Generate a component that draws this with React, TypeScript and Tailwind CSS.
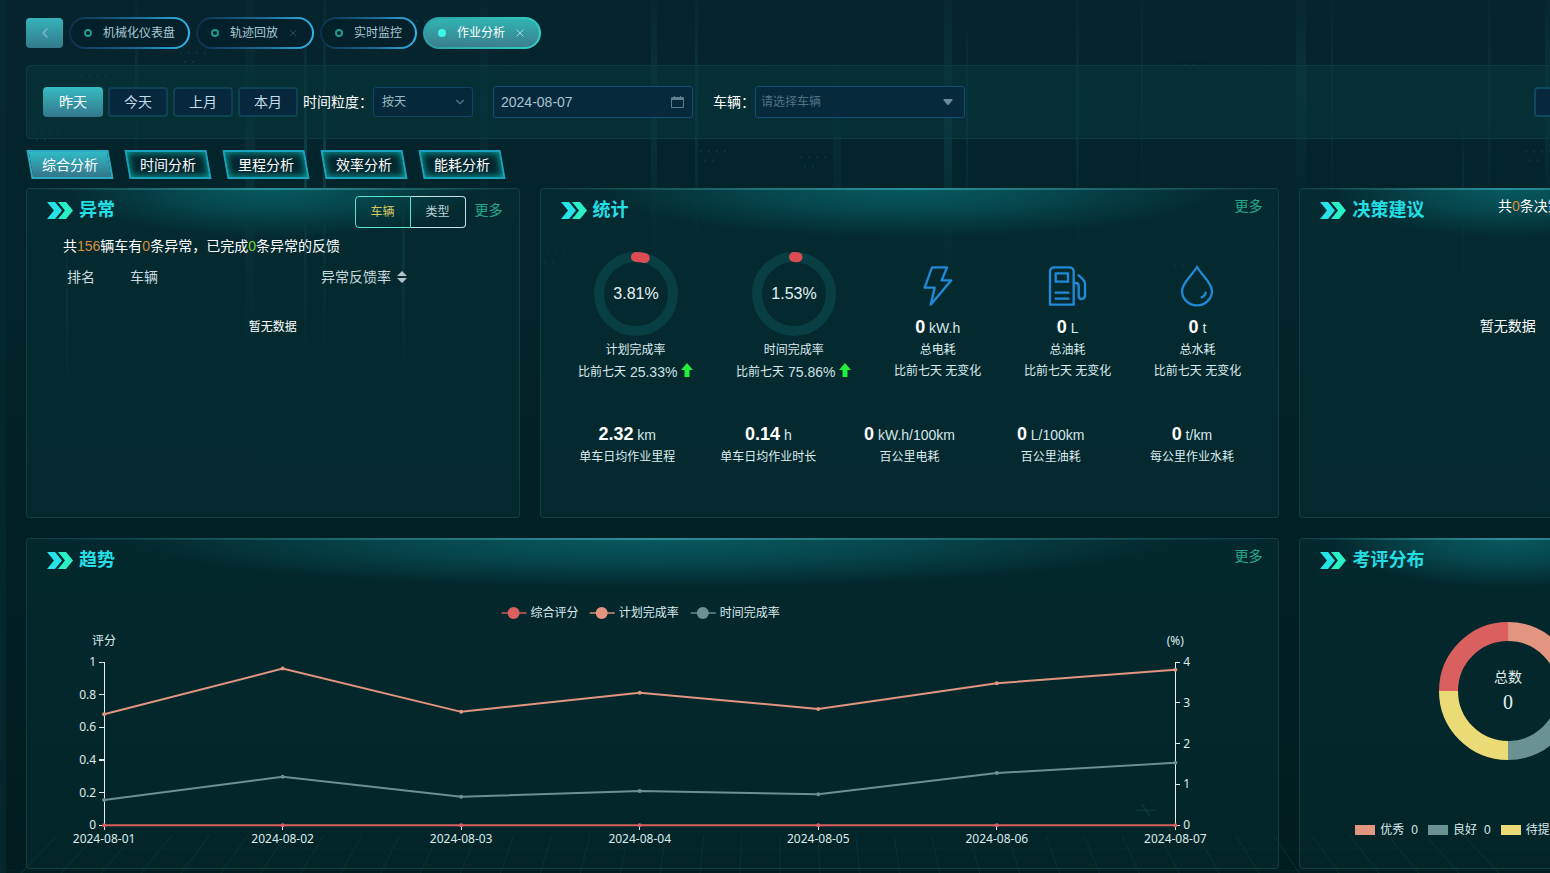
import type { ReactNode } from "react";
import { ChevronDown, ChevronLeft, X } from "lucide-react";
import clsx from "clsx";

const tags = [
  { label: "机械化仪表盘" },
  { label: "轨迹回放", closable: true },
  { label: "实时监控" },
  { label: "作业分析", closable: true, active: true },
];

const ranges = ["昨天", "今天", "上月", "本月"];

const tabs = ["综合分析", "时间分析", "里程分析", "效率分析", "能耗分析"];

const rings = [
  { percent: 3.81, label: "计划完成率", change: "25.33%" },
  { percent: 1.53, label: "时间完成率", change: "75.86%" },
];

const averages = [
  { value: "2.32", unit: "km", label: "单车日均作业里程" },
  { value: "0.14", unit: "h", label: "单车日均作业时长" },
  { value: "0", unit: "kW.h/100km", label: "百公里电耗" },
  { value: "0", unit: "L/100km", label: "百公里油耗" },
  { value: "0", unit: "t/km", label: "每公里作业水耗" },
];

const days = [
  "2024-08-01",
  "2024-08-02",
  "2024-08-03",
  "2024-08-04",
  "2024-08-05",
  "2024-08-06",
  "2024-08-07",
];

const series = [
  {
    name: "计划完成率",
    color: "#e2957f",
    max: 4,
    legend: 562,
    data: [2.72, 3.84, 2.78, 3.25, 2.85, 3.48, 3.81],
  },
  {
    name: "时间完成率",
    color: "#6b9292",
    max: 4,
    legend: 663,
    data: [0.62, 1.19, 0.7, 0.84, 0.76, 1.28, 1.53],
  },
  {
    name: "综合评分",
    color: "#d9605f",
    max: 1,
    legend: 474,
    data: [0, 0, 0, 0, 0, 0, 0],
  },
];

const grades = [
  { label: "优秀", color: "#e2957f" },
  { label: "良好", color: "#6b9292" },
  { label: "待提升", color: "#ebdb77" },
  { label: "不合格", color: "#d9605f" },
];

// x, top, height, width, opacity
const beams = [
  [245, 0, 400, 10, 0.14],
  [304, 20, 350, 3, 0.35],
  [323, 0, 370, 3, 0.3],
  [66, 240, 160, 2, 0.2],
  [135, 0, 190, 3, 0.15],
  [402, 180, 200, 3, 0.25],
  [480, 0, 260, 8, 0.1],
  [651, 0, 260, 6, 0.2],
  [695, 0, 260, 3, 0.22],
  [833, 60, 220, 8, 0.1],
  [944, 0, 290, 8, 0.24],
  [966, 30, 200, 2, 0.22],
  [1076, 0, 270, 3, 0.2],
  [1141, 0, 210, 2, 0.15],
  [1296, 0, 210, 10, 0.18],
  [1331, 0, 220, 2, 0.15],
  [1462, 120, 180, 2, 0.15],
  [1488, 0, 240, 3, 0.15],
  [1545, 0, 220, 5, 0.2],
];

const dots = [
  [32, 130],
  [80, 75],
  [180, 52],
  [200, 88],
  [400, 20],
  [665, 128],
  [700, 150],
  [800, 156],
  [1170, 255],
  [1180, 55],
  [1525, 150],
  [540, 252],
];

function Backdrop() {
  return (
    <svg
      className="absolute inset-0 h-full w-full"
      viewBox="0 0 1550 873"
      preserveAspectRatio="none"
      aria-hidden="true"
    >
      <defs>
        <linearGradient id="beam" x1="0" y1="0" x2="0" y2="1">
          <stop offset="0" stopColor="#17606b" stopOpacity="0.3" />
          <stop offset="0.4" stopColor="#1c7480" />
          <stop offset="1" stopColor="#17606b" stopOpacity="0" />
        </linearGradient>
      </defs>
      {beams.map(([x, y, h, w, o]) => (
        <rect key={x} x={x} y={y} width={w} height={h} fill="url(#beam)" opacity={o} />
      ))}
      {dots.map(([x, y]) => (
        <g key={`${x}-${y}`} fill="#1d7f7c" opacity="0.18">
          {[0, 8, 16, 24].map((d) => (
            <rect key={d} x={x + d} y={y} width="2" height="2" />
          ))}
          <rect x={x + 4} y={y + 9} width="2" height="2" />
          <rect x={x + 12} y={y + 9} width="2" height="2" />
        </g>
      ))}
      <g stroke="#1e6a64" strokeWidth="1" opacity="0.25">
        <path d="M0 869H1550M120 848H1550" opacity="0.5" />
        {Array.from({ length: 38 }, (_, i) => {
          const x = 20 + i * 40;
          return <path key={i} d={`M${x} 873L${x + (775 - x) * 0.05} 834`} />;
        })}
      </g>
      <path d="M1136 809h20M1142 803l8 12" stroke="#3f7f7c" opacity="0.4" />
    </svg>
  );
}

function Tag({ label, closable, active }: { label: string; closable?: boolean; active?: boolean }) {
  return (
    <div
      className={clsx(
        "flex h-8 items-center rounded-full border-2 border-transparent px-[13px] text-xs",
        active
          ? "text-white [background:linear-gradient(to_bottom,#31b3b2,#3a7f8d)_padding-box,linear-gradient(to_right,#2d9da3,#2fd0c4)_border-box]"
          : "text-[#a9c9d4] [background:linear-gradient(#04202a,#04202a)_padding-box,linear-gradient(to_right,#0e2f4d,#1d6f99_60%,#35b5e8)_border-box]",
      )}
    >
      <span
        className={clsx(
          "mr-[11px] size-2 rounded-full",
          active ? "bg-[#3ff5ea]" : "border-2 border-[#1f9a8d]",
        )}
      />
      <a href="#" aria-current={active ? "page" : undefined}>
        {label}
      </a>
      {closable && (
        <button type="button" aria-label={`关闭${label}`} className="ml-[9px]">
          <X className={clsx("size-3", active ? "text-[#a5dbe0]" : "text-[#35484d]")} strokeWidth={2} />
        </button>
      )}
    </div>
  );
}

function Panel({
  title,
  extra,
  className,
  children,
}: {
  title: string;
  extra?: ReactNode;
  className?: string;
  children: ReactNode;
}) {
  return (
    <section
      className={clsx(
        "relative flex min-h-[330px] flex-col rounded-[3px] border border-[#123d43] bg-[#08353a]/40 bg-[radial-gradient(ellipse_42%_48px_at_50%_0,#08585f_0%,#074a51_40%,#053a41_70%,transparent_100%)] bg-no-repeat",
        className,
      )}
    >
      <div className="absolute -top-px right-0 left-0 h-0.5 bg-linear-to-r from-transparent via-[#2c9099] to-transparent" />
      <header className="flex h-[42px] items-center pr-4 pl-5">
        <svg className="mr-1.5 h-[17px] w-[26px]" viewBox="0 0 26 17" aria-hidden="true">
          <path d="M0 0H8L15 8.5L8 17H0L7 8.5Z" fill="#25e3e6" />
          <path d="M11 0H19L26 8.5L19 17H11L18 8.5Z" fill="#2af0c8" />
        </svg>
        <h2 className="text-lg font-bold text-[#23dfe4]">{title}</h2>
        <div className="ml-auto flex items-center">{extra}</div>
      </header>
      {children}
    </section>
  );
}

function More({ className }: { className?: string }) {
  return (
    <a href="#" className={clsx("text-sm text-[#27a98c]", className)}>
      更多
    </a>
  );
}

function Ring({ percent }: { percent: number }) {
  const length = 2 * Math.PI * 37;
  return (
    <svg className="size-[90px]" viewBox="0 0 90 90" role="img" aria-label={`${percent}%`}>
      <circle cx="45" cy="45" r="37" fill="none" stroke="#073f45" strokeWidth="10" />
      <circle
        cx="45"
        cy="45"
        r="37"
        fill="none"
        stroke="#dc4b52"
        strokeWidth="10"
        strokeLinecap="round"
        strokeDasharray={`${(length * percent) / 100} ${length}`}
        transform="rotate(-90 45 45)"
      />
      <text x="45" y="50" textAnchor="middle" fontSize="16" fill="#e4f1f3">
        {percent}%
      </text>
    </svg>
  );
}

function BoltIcon() {
  return (
    <svg className="h-[42px] w-[30px]" viewBox="190 260 90 126" fill="none" stroke="#218ad6" strokeWidth="7" strokeLinejoin="round">
      <path d="M217 267H262L246 306H275L213 379L225 328H195Z" />
    </svg>
  );
}

function FuelIcon() {
  return (
    <svg className="h-[42px] w-10" viewBox="564 260 120 126" fill="none" stroke="#218ad6" strokeWidth="7" strokeLinecap="round">
      <path d="M570 379V280Q570 267 584 267H627Q641 267 641 280V379Z" />
      <path d="M587 285H624V310H587ZM587 343H625M587 361H625" />
      <path d="M643 314H648Q656 314 656 323V352Q656 362 665 362T675 352V316Q675 309 669 303L656 291" />
    </svg>
  );
}

function DropIcon() {
  return (
    <svg className="h-[42px] w-9" viewBox="956 260 108 126" fill="none" stroke="#218ad6" strokeWidth="7" strokeLinecap="round">
      <path d="M1010 266C996 290 965 314 965 338A45 43 0 0 0 1055 338C1055 314 1024 290 1010 266Z" />
      <path d="M1024 357Q1034 353 1036 343" />
    </svg>
  );
}

const totals = [
  { unit: "kW.h", label: "总电耗", icon: <BoltIcon /> },
  { unit: "L", label: "总油耗", icon: <FuelIcon /> },
  { unit: "t", label: "总水耗", icon: <DropIcon /> },
];

function Amount({ value, unit }: { value: string; unit: string }) {
  return (
    <p className="h-6 text-sm leading-6 text-[#d3e6e9]">
      <b className="text-lg leading-6 text-white">{value}</b> {unit}
    </p>
  );
}

function TrendChart() {
  const left = 77;
  const right = 1147;
  const bottom = 235;
  const height = 163;
  const x = (i: number) => left + ((right - left) / 6) * i;
  const y = (ratio: number) => bottom - ratio * height;

  return (
    <svg
      className="w-full font-['Noto_Sans','Noto_Sans_CJK_SC',sans-serif] text-xs"
      viewBox="0 0 1250 278"
      fill="#dcebec"
      role="img"
      aria-label="趋势"
    >
      {series.map((s) => (
        <g key={s.name}>
          <path d={`M${s.legend} 23h25`} stroke={s.color} strokeWidth="2" opacity="0.7" />
          <circle cx={s.legend + 12} cy="23" r="6" fill={s.color} />
          <text x={s.legend + 29} y="27">
            {s.name}
          </text>
        </g>
      ))}
      <text x={left} y="55" textAnchor="middle">
        评分
      </text>
      <text x={right} y="55" textAnchor="middle">
        (%)
      </text>

      {/* Axes */}
      <g stroke="#e3efef" shapeRendering="crispEdges">
        <path d={`M${left} ${y(1)}V${bottom}M${right} ${y(1)}V${bottom}`} />
        {[0, 0.2, 0.4, 0.6, 0.8, 1].map((v) => (
          <path key={v} d={`M${left - 5} ${y(v)}h5`} />
        ))}
        {[0, 1, 2, 3, 4].map((v) => (
          <path key={v} d={`M${right} ${y(v / 4)}h5`} />
        ))}
        {days.map((day, i) => (
          <path key={day} d={`M${x(i)} ${bottom}v5`} />
        ))}
      </g>
      {[0, 0.2, 0.4, 0.6, 0.8, 1].map((v) => (
        <text key={v} x={left - 8} y={y(v) + 4} textAnchor="end">
          {v}
        </text>
      ))}
      {[0, 1, 2, 3, 4].map((v) => (
        <text key={v} x={right + 8} y={y(v / 4) + 4}>
          {v}
        </text>
      ))}
      {days.map((day, i) => (
        <text key={day} x={x(i)} y="253" textAnchor="middle">
          {day}
        </text>
      ))}

      {series.map((s) => (
        <g key={s.name} fill={s.color}>
          <polyline
            points={s.data.map((v, i) => `${x(i)},${y(v / s.max)}`).join(" ")}
            fill="none"
            stroke={s.color}
            strokeWidth="2"
          />
          {s.data.map((v, i) => (
            <circle key={i} cx={x(i)} cy={y(v / s.max)} r="2" />
          ))}
        </g>
      ))}
    </svg>
  );
}

function GradeDonut() {
  const quarter = (2 * Math.PI * 59.5) / 4;
  return (
    <svg className="size-[140px]" viewBox="0 0 140 140" role="img" aria-label="考评分布">
      {grades.map((g, i) => (
        <circle
          key={g.label}
          cx="70"
          cy="70"
          r="59.5"
          fill="none"
          stroke={g.color}
          strokeWidth="19"
          strokeDasharray={`${quarter} ${quarter * 3}`}
          transform={`rotate(${i * 90 - 90} 70 70)`}
        />
      ))}
      <text x="70" y="61" textAnchor="middle" fontSize="14" fill="#e3efef">
        总数
      </text>
      <text
        x="70"
        y="88"
        textAnchor="middle"
        fontSize="20"
        fill="#e3efef"
        className="font-['Liberation_Serif',serif]"
      >
        0
      </text>
    </svg>
  );
}

export default function App() {
  return (
    <div className="relative min-h-screen overflow-hidden bg-linear-to-b from-[#06242e] via-[#03242b] via-30% to-[#001c1e] font-['Liberation_Sans','Noto_Sans_CJK_SC',sans-serif] text-sm text-white">
      <Backdrop />
      <div className="absolute inset-y-0 left-0 w-1.5 bg-[#062c33]/60" />

      {/* The board is wider than the window and runs off its right edge */}
      <main className="relative w-[112%] pt-[17px] pr-5 pb-[5px] pl-[26px]">
        <nav className="flex items-center gap-1.5">
          <button
            type="button"
            aria-label="返回"
            className="flex h-[30px] w-[37px] items-center justify-center rounded-sm bg-linear-to-b from-[#34b4bb] to-[#327a8a]"
          >
            <ChevronLeft className="size-4 text-[#86b4d0]" strokeWidth={2} />
          </button>
          {tags.map((tag) => (
            <Tag key={tag.label} {...tag} />
          ))}
        </nav>

        {/* Filters */}
        <form className="mt-4 flex h-[74px] items-center rounded-sm border border-[#0f3a40] bg-[#08383e]/50 px-4">
          <div className="flex gap-[5px]">
            {ranges.map((range, i) => (
              <button
                key={range}
                type="button"
                className={clsx(
                  "h-[30px] w-[60px] rounded-sm",
                  i === 0
                    ? "bg-linear-to-b from-[#35bcc1] to-[#32788c] text-white"
                    : "border-2 border-[#0d4153] bg-[#07273c] text-[#c3dcec]",
                )}
              >
                {range}
              </button>
            ))}
          </div>
          <label htmlFor="grain" className="ml-[5px]">
            时间粒度：
          </label>
          <div className="relative">
            <select
              id="grain"
              className="block h-[30px] w-[100px] appearance-none rounded-[3px] border border-[#0f4462] bg-[#05293a] pl-2 text-xs text-[#9dbac8]"
            >
              <option>按天</option>
            </select>
            <ChevronDown
              className="pointer-events-none absolute top-2 right-1.5 size-3.5 text-[#567789]"
              strokeWidth={2}
            />
          </div>
          <div className="relative ml-5">
            <input
              type="text"
              aria-label="日期"
              defaultValue="2024-08-07"
              className="block h-8 w-[200px] rounded-[3px] border border-[#0f4f77] bg-[#07293c] pl-[7px] text-sm text-[#a9c4d2]"
            />
            <svg
              className="pointer-events-none absolute top-2.5 right-[9px] h-3 w-[13px]"
              viewBox="0 0 13 12"
              fill="#5e7d8d"
              aria-hidden="true"
            >
              <path d="M1 1H3V0H4V1H9V0H10V1H12Q13 1 13 2V11Q13 12 12 12H1Q0 12 0 11V2Q0 1 1 1ZM1 4V11H12V4Z" />
            </svg>
          </div>
          <label htmlFor="vehicle" className="ml-5">
            车辆：
          </label>
          <div className="relative">
            <select
              id="vehicle"
              className="block h-8 w-[210px] appearance-none rounded-[3px] border border-[#0f4f77] bg-[#07293c] pl-[5px] text-xs text-[#4f7285]"
            >
              <option>请选择车辆</option>
            </select>
            <svg className="pointer-events-none absolute top-[13px] right-3 h-1.5 w-2.5" viewBox="0 0 10 6" fill="#6b8a99">
              <path d="M1 0H9Q10 0 9.500 1L6 5.500Q5 6.300 4 5.500L.5 1Q0 0 1 0Z" />
            </svg>
          </div>
          <button
            type="button"
            aria-label="导出"
            className="mr-[105px] ml-auto h-[30px] w-[60px] rounded-sm border-2 border-[#0d4a60] bg-[#07273c]"
          />
        </form>

        <div role="tablist" className="mt-[11px] flex gap-2.5">
          {tabs.map((tab, i) => (
            <button
              key={tab}
              type="button"
              role="tab"
              aria-selected={i === 0}
              className="relative h-[29px] w-[88px]"
            >
              <span
                className={clsx(
                  "absolute inset-x-[3px] inset-y-0 skew-x-[10deg] border-2",
                  i === 0
                    ? "border-[#2ba9be] bg-linear-to-b from-[#2fbac6] to-[#32768a]"
                    : "border-[#1ba3bd] bg-[#04262e] shadow-[inset_0_0_7px_1px_#0a9a92]",
                )}
              />
              <span className="relative">{tab}</span>
            </button>
          ))}
        </div>

        <div className="mt-[9px] grid grid-cols-[493fr_739fr_416fr] gap-5">
          <Panel
            title="异常"
            extra={
              <>
                <div className="mt-1 mr-[9px] flex h-8 text-xs">
                  <button type="button" className="w-14 rounded-l-sm border border-[#55e6cd] text-[#d9c75f]">
                    车辆
                  </button>
                  <button type="button" className="w-[55px] rounded-r-sm border border-l-0 border-[#c5e2e4] text-[#b9cfd4]">
                    类型
                  </button>
                </div>
                <More />
              </>
            }
          >
            <p className="mt-[5px] pl-9 leading-5">
              共<span className="text-[#d98f3a]">156</span>辆车有
              <span className="text-[#d98f3a]">0</span>条异常，已完成
              <span className="text-[#7fd32c]">0</span>条异常的反馈
            </p>
            <table className="mx-[30px] mt-1.5 table-fixed text-left text-[#c9d9dd]">
              <thead>
                <tr className="h-[30px]">
                  <th className="w-[63px] pl-2.5 font-normal">排名</th>
                  <th className="w-[191px] pl-2.5 font-normal">车辆</th>
                  <th className="pl-2.5 font-normal">
                    <button type="button" className="flex items-center gap-1.5">
                      异常反馈率
                      <svg className="h-3 w-2.5" viewBox="0 0 10 12" fill="#b4c3cc" aria-hidden="true">
                        <path d="M5 0L10 5H0ZM5 12L0 7H10Z" />
                      </svg>
                    </button>
                  </th>
                </tr>
              </thead>
            </table>
            <p className="mt-[25px] text-center text-xs leading-5">暂无数据</p>
          </Panel>

          <Panel title="统计" extra={<More className="mb-2" />}>
            <div className="flex items-end justify-around px-4 pt-[18px] text-xs text-[#dcebee]">
              {rings.map((ring) => (
                <div key={ring.label} className="flex flex-col items-center">
                  <Ring percent={ring.percent} />
                  <p className="h-[22px] leading-[22px]">{ring.label}</p>
                  <p className="flex h-[21px] items-center gap-1">
                    比前七天 <span className="text-sm text-[#cfe0e3]">{ring.change}</span>
                    <svg className="mb-1 h-3.5 w-3" viewBox="0 0 12 14" fill="#22ee3c" aria-label="上升">
                      <path d="M6 0L12 7H8.500V14H3.500V7H0Z" />
                    </svg>
                  </p>
                </div>
              ))}
              {totals.map((total) => (
                <div key={total.label} className="flex flex-col items-center">
                  <div className="mb-2">{total.icon}</div>
                  <Amount value="0" unit={total.unit} />
                  <p className="h-[22px] leading-[22px]">{total.label}</p>
                  <p className="h-[21px] leading-[21px]">比前七天 无变化</p>
                </div>
              ))}
            </div>
            <div className="mt-10 grid grid-cols-5 px-4 text-center text-xs text-[#dcebee]">
              {averages.map((item) => (
                <div key={item.label}>
                  <Amount value={item.value} unit={item.unit} />
                  <p className="h-[22px] leading-[22px]">{item.label}</p>
                </div>
              ))}
            </div>
          </Panel>

          <Panel
            title="决策建议"
            extra={
              <p className="mb-2 w-[201px]">
                共<span className="text-[#d98f3a]">0</span>条决策建议
              </p>
            }
          >
            <p className="mt-[85px] text-center leading-5">暂无数据</p>
          </Panel>

          <Panel title="趋势" extra={<More className="mb-2" />} className="col-span-2">
            <div className="pt-[9px]">
              <TrendChart />
            </div>
          </Panel>

          <Panel title="考评分布">
            <div className="flex flex-col items-center pt-10">
              <GradeDonut />
              <ul className="mt-[61px] flex gap-2.5 text-xs text-[#dcebec]">
                {grades.map((grade) => (
                  <li key={grade.label} className="flex items-center">
                    <span className="mr-[5px] h-2.5 w-5" style={{ backgroundColor: grade.color }} />
                    {grade.label}
                    <span className="ml-[7px]">0</span>
                  </li>
                ))}
              </ul>
            </div>
          </Panel>
        </div>
      </main>
    </div>
  );
}
